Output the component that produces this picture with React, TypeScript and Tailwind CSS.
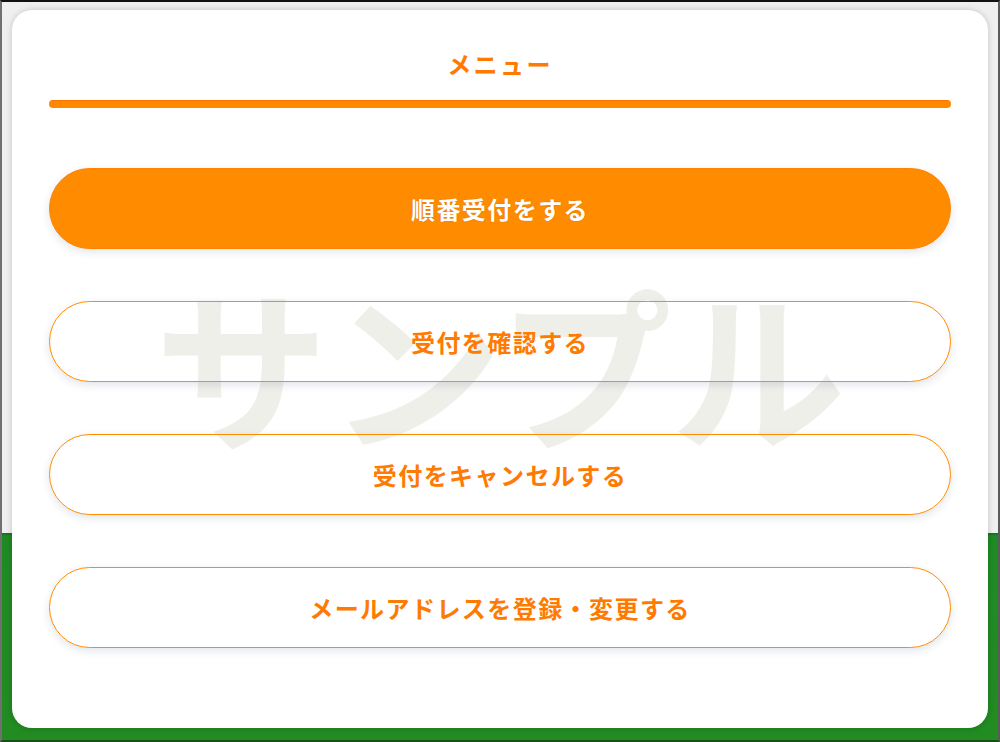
import React from "react";

const items = ["受付を確認する", "受付をキャンセルする", "メールアドレスを登録・変更する"];

export default function App() {
  return (
    <div
      className="w-[1000px] h-[742px] border-t-2 border-t-[#111] border-l-2 border-l-[#707070] border-r-2 border-r-[#5a5a5a] border-b-2 border-b-[#1b4d1b] bg-[linear-gradient(to_bottom,#efefef_0px,#efefef_531px,#176b17_531px,#1f8a24_534px,#228b22_700px)] pt-[8px] pl-[10px] pr-[10px]"
      style={{ fontFamily: '"Noto Sans CJK JP", "Noto Sans", sans-serif' }}
    >
      <div className="relative w-[976px] h-[718px] bg-white rounded-[20px] shadow-[0_0_6px_rgba(0,0,0,0.18)] pt-[36px] px-[37px] flex flex-col">
        <div className="absolute left-0 right-0 top-[248px] flex justify-center pointer-events-none select-none z-0">
          <span className="text-[174px] leading-[208px] font-bold text-[#efefea] whitespace-nowrap">サンプル</span>
        </div>
        <h1 className="relative z-10 text-center text-[24px] leading-[36px] font-bold text-[#ff7a00] tracking-[0.1em]">メニュー</h1>
        <div className="relative z-10 mt-[18px] h-[8px] rounded-full bg-[#ff8a00] border-t border-t-[#ff7300]" />
        <div className="relative z-10 mt-[60px] flex flex-col gap-[52px]">
          <button className="h-[81px] w-full rounded-full bg-[#ff8c00] border border-[#ff8200] shadow-[0_3px_8px_rgba(0,40,80,0.12)] text-white text-[24px] font-bold tracking-[0.06em] [text-shadow:0_0_2px_rgba(0,0,0,0.15)]">
            順番受付をする
          </button>
          {items.map((t) => (
            <button
              key={t}
              className="h-[81px] w-full rounded-full bg-transparent border border-[#ff8c00] shadow-[0_3px_8px_rgba(0,40,80,0.12)] text-[#ff7a00] text-[24px] font-bold tracking-[0.06em]"
            >
              {t}
            </button>
          ))}
        </div>
      </div>
    </div>
  );
}
